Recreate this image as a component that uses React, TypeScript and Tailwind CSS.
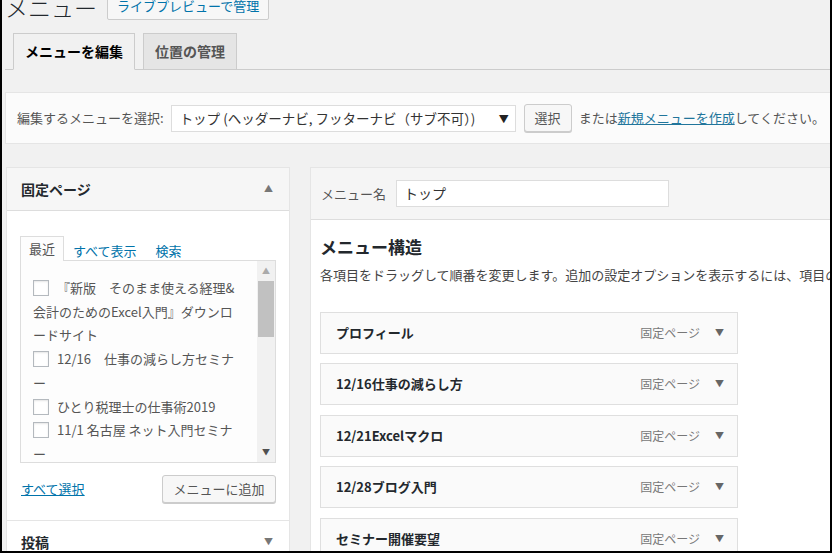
const font = { fontFamily: "'Noto Sans CJK JP', 'Noto Sans', sans-serif" }

const recent = [
  { lines: ['『新版　そのまま使える経理&', '会計のためのExcel入門』ダウンロ', 'ードサイト'] },
  { lines: ['12/16　仕事の減らし方セミナ', 'ー'] },
  { lines: ['ひとり税理士の仕事術2019'] },
  { lines: ['11/1 名古屋 ネット入門セミナ', 'ー'] },
]

const menuItems = ['プロフィール', '12/16仕事の減らし方', '12/21Excelマクロ', '12/28ブログ入門', 'セミナー開催要望']

function Checkbox() {
  return <span className="inline-block align-[-3px] w-4 h-4 border border-[#b4b9be] bg-white shadow-[inset_0_1px_2px_rgba(0,0,0,0.1)] mr-[8px]" />
}

export default function App() {
  return (
    <div
      style={font}
      className="w-[832px] h-[553px] overflow-hidden bg-[#f1f1f1] border-l-2 border-r-2 border-b-2 border-black text-[#444] text-[13px]"
    >
      <div className="pl-[3px]">
        {/* title row */}
        <div className="flex items-end gap-[10px] -mt-[7px] h-[27px]">
          <h1 className="text-[23px] leading-none font-light text-[#23282d] pb-[1px]">メニュー</h1>
          <span className="h-[28px] px-[9px] flex items-center border border-[#ccc] bg-[#f7f7f7] rounded-[2px] text-[#0073aa] text-[13px]">
            ライブプレビューで管理
          </span>
        </div>

        {/* tabs */}
        <div className="mt-[13px] flex items-end gap-2 pl-[8px] border-b border-[#ccc] h-[37px]">
          <div className="h-[37px] -mb-px px-[11px] flex items-center border border-[#ccc] border-b-[#f1f1f1] bg-[#f1f1f1] text-[14px] font-bold text-[#000]">
            メニューを編集
          </div>
          <div className="h-[36px] px-[11px] flex items-center border border-[#ccc] border-b-0 bg-[#e5e5e5] text-[14px] font-bold text-[#555]">
            位置の管理
          </div>
        </div>

        {/* manage menus */}
        <div className="mt-[22px] w-[900px] h-[52px] bg-[#fbfbfb] border border-[#e5e5e5] flex items-center pl-[11px] gap-[7px]">
          <span className="text-[#555]">編集するメニューを選択:</span>
          <div className="w-[345px] h-[27px] bg-white border border-[#ddd] flex items-center justify-between pl-[8px] pr-[6px] text-[#333] text-[13.5px]">
            <span>トップ (ヘッダーナビ, フッターナビ（サブ不可）)</span>
            <span className="text-[10px] text-[#222]">▼</span>
          </div>
          <span className="w-[48px] h-[28px] ml-[1px] flex items-center justify-center bg-[#f7f7f7] border border-[#ccc] rounded-[3px] shadow-[0_1px_0_#ccc] text-[#555]">
            選択
          </span>
          <span className="text-[#555]">
            または<a className="text-[#21759b] underline">新規メニューを作成</a>してください。
          </span>
        </div>

        <div className="mt-[23px] flex gap-[20px] items-start">
          {/* left column */}
          <div className="w-[284px] shrink-0 ml-[1px]">
            <div className="bg-white border border-[#e5e5e5]">
              <div className="h-[43px] bg-[#f6f6f6] border-b border-[#ddd] flex items-center justify-between pl-[14px] pr-[16px]">
                <span className="text-[14px] font-bold text-[#23282d]">固定ページ</span>
                <span className="text-[9px] text-[#777]">▲</span>
              </div>
              <div className="pl-[13px] pr-[13px] pt-[24px] pb-[17px]">
                <div className="flex items-end h-[25px] text-[13px]">
                  <span className="h-[25px] px-[8px] flex items-center border border-[#ddd] border-b-0 bg-[#fdfdfd] text-[#555] -mb-px relative">
                    最近
                  </span>
                  <span className="ml-[9px] text-[#0073aa]">すべて表示</span>
                  <span className="ml-[19px] text-[#0073aa]">検索</span>
                </div>
                <div className="h-[203px] border border-[#ddd] bg-[#fdfdfd] flex overflow-hidden">
                  <div className="flex-1 pl-[12px] pt-[15px] text-[#555] leading-[23.7px] overflow-hidden">
                    {recent.map((item, i) => (
                      <div key={i} className="whitespace-nowrap">
                        {item.lines.map((l, j) => (
                          <div key={j}>
                            {j === 0 && <Checkbox />}
                            {l}
                          </div>
                        ))}
                      </div>
                    ))}
                  </div>
                  <div className="w-[18px] bg-[#f1f1f1] flex flex-col items-center justify-between text-[8px] text-[#a3a3a3] py-[4px]">
                    <div className="flex flex-col items-center w-full">
                      <span className="text-[#aaa]">▲</span>
                      <div className="mt-[4px] w-[16px] h-[56px] bg-[#c1c1c1]" />
                    </div>
                    <span className="text-[#505050]">▼</span>
                  </div>
                </div>
                <div className="mt-[12px] flex items-center justify-between">
                  <a className="text-[#0073aa] underline ml-[1px]">すべて選択</a>
                  <span className="w-[114px] h-[28px] flex items-center justify-center bg-[#f7f7f7] border border-[#ccc] rounded-[3px] shadow-[0_1px_0_#ccc] text-[#555]">
                    メニューに追加
                  </span>
                </div>
              </div>
            </div>
            <div className="bg-white border border-t-0 border-[#e5e5e5] h-[43px] flex items-center justify-between pl-[14px] pr-[16px]">
              <span className="text-[14px] font-bold text-[#23282d]">投稿</span>
              <span className="text-[9px] text-[#777]">▼</span>
            </div>
          </div>

          {/* right column */}
          <div className="w-[600px] shrink-0 bg-white border border-[#e5e5e5]">
            <div className="h-[52px] bg-[#f5f5f5] border-b border-[#ddd] flex items-center pl-[10px] gap-[10px]">
              <span className="text-[#555]">メニュー名</span>
              <div className="w-[273px] h-[27px] bg-white border border-[#ddd] flex items-center pl-[7px] text-[14px] text-[#333]">
                トップ
              </div>
            </div>
            <div className="pl-[9px] pt-[15px]">
              <h3 className="text-[17px] font-bold text-[#23282d] leading-[24px]">メニュー構造</h3>
              <p className="mt-[6px] text-[#444] whitespace-nowrap">
                各項目をドラッグして順番を変更します。追加の設定オプションを表示するには、項目の右側にある矢印をクリックしてください。
              </p>
              <div className="mt-[27px] flex flex-col gap-[9.5px]">
                {menuItems.map((m) => (
                  <div
                    key={m}
                    className="w-[418px] h-[42px] bg-[#fafafa] border border-[#dfdfdf] flex items-center pl-[15px] pr-[13px]"
                  >
                    <span className="flex-1 font-bold text-[#23282d]">{m}</span>
                    <span className="text-[12px] text-[#777]">固定ページ</span>
                    <span className="ml-[15px] text-[9px] text-[#666]">▼</span>
                  </div>
                ))}
              </div>
            </div>
          </div>
        </div>
      </div>
    </div>
  )
}
